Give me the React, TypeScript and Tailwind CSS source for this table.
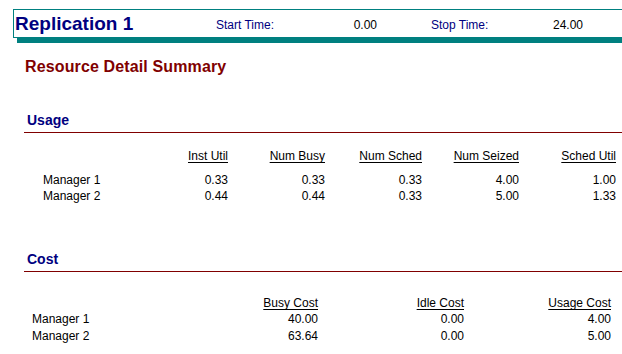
import { FunctionComponent } from 'react';

const usageHeader = ['Inst Util', 'Num Busy', 'Num Sched', 'Num Seized', 'Sched Util'];

const usageRows = [
  { name: 'Manager 1', values: ['0.33', '0.33', '0.33', '4.00', '1.00'] },
  { name: 'Manager 2', values: ['0.44', '0.44', '0.33', '5.00', '1.33'] },
];

const costHeader = ['Busy Cost', 'Idle Cost', 'Usage Cost'];

const costRows = [
  { name: 'Manager 1', values: ['40.00', '0.00', '4.00'] },
  { name: 'Manager 2', values: ['63.64', '0.00', '5.00'] },
];

const font = { fontFamily: '"Liberation Sans", Arial, sans-serif' };

const SectionTitle: FunctionComponent<{ title: string; className: string }> = ({
  title,
  className,
}) => (
  <div className={className}>
    <div className="pl-[27px] h-[18px] leading-[18px] text-[14px] font-bold text-[#000080]">
      {title}
    </div>
    <div className="ml-[24px] mt-[3px] h-px bg-[#800000]" />
  </div>
);

const App = (): JSX.Element => {
  return (
    <div className="w-[622px] h-[354px] overflow-hidden bg-white text-black" style={font}>
      {/* report header */}
      <div className="pt-[9px]">
        <div className="ml-[13px] w-[630px] h-[29px] flex items-center border border-[#008080] bg-white shadow-[4px_5px_0_#008080]">
          <div className="w-[202px] pl-px text-[19px] leading-[22px] font-bold text-[#000080]">
            Replication 1
          </div>
          <div className="w-[161px] flex justify-between text-[12px] leading-[16px] mt-[2px]">
            <span className="text-[#000080]">Start Time:</span>
            <span>0.00</span>
          </div>
          <div className="ml-[54px] w-[152px] flex justify-between text-[12px] leading-[16px] mt-[2px]">
            <span className="text-[#000080]">Stop Time:</span>
            <span>24.00</span>
          </div>
        </div>
      </div>

      <div className="mt-[19px] pl-[25px] h-[20px] leading-[20px] text-[16px] tracking-[0.13px] font-bold text-[#800000]">
        Resource Detail Summary
      </div>

      {/* usage */}
      <SectionTitle title="Usage" className="mt-[34px]" />

      <div className="mt-[15px] pl-[43px] text-[12px]">
        <div className="grid grid-cols-[120px_65px_97px_97px_97px_97px] h-[16px] leading-[16px]">
          <span />
          {usageHeader.map((h) => (
            <span key={h} className="text-right">
              <span className="underline underline-offset-2">{h}</span>
            </span>
          ))}
        </div>
        <div className="mt-[8px]">
          {usageRows.map((row) => (
            <div
              key={row.name}
              className="grid grid-cols-[120px_65px_97px_97px_97px_97px] h-[16px] leading-[16px]"
            >
              <span>{row.name}</span>
              {row.values.map((v, i) => (
                <span key={i} className="text-right">
                  {v}
                </span>
              ))}
            </div>
          ))}
        </div>
      </div>

      {/* cost */}
      <SectionTitle title="Cost" className="mt-[46px]" />

      <div className="mt-[23px] pl-[32px] text-[12px]">
        <div className="grid grid-cols-[206px_80px_146px_147px] h-[16px] leading-[16px]">
          <span />
          {costHeader.map((h) => (
            <span key={h} className="text-right">
              <span className="underline underline-offset-2">{h}</span>
            </span>
          ))}
        </div>
        <div>
          {costRows.map((row) => (
            <div
              key={row.name}
              className="grid grid-cols-[206px_80px_146px_147px] h-[17px] leading-[17px]"
            >
              <span>{row.name}</span>
              {row.values.map((v, i) => (
                <span key={i} className="text-right">
                  {v}
                </span>
              ))}
            </div>
          ))}
        </div>
      </div>
    </div>
  );
};

export default App;
